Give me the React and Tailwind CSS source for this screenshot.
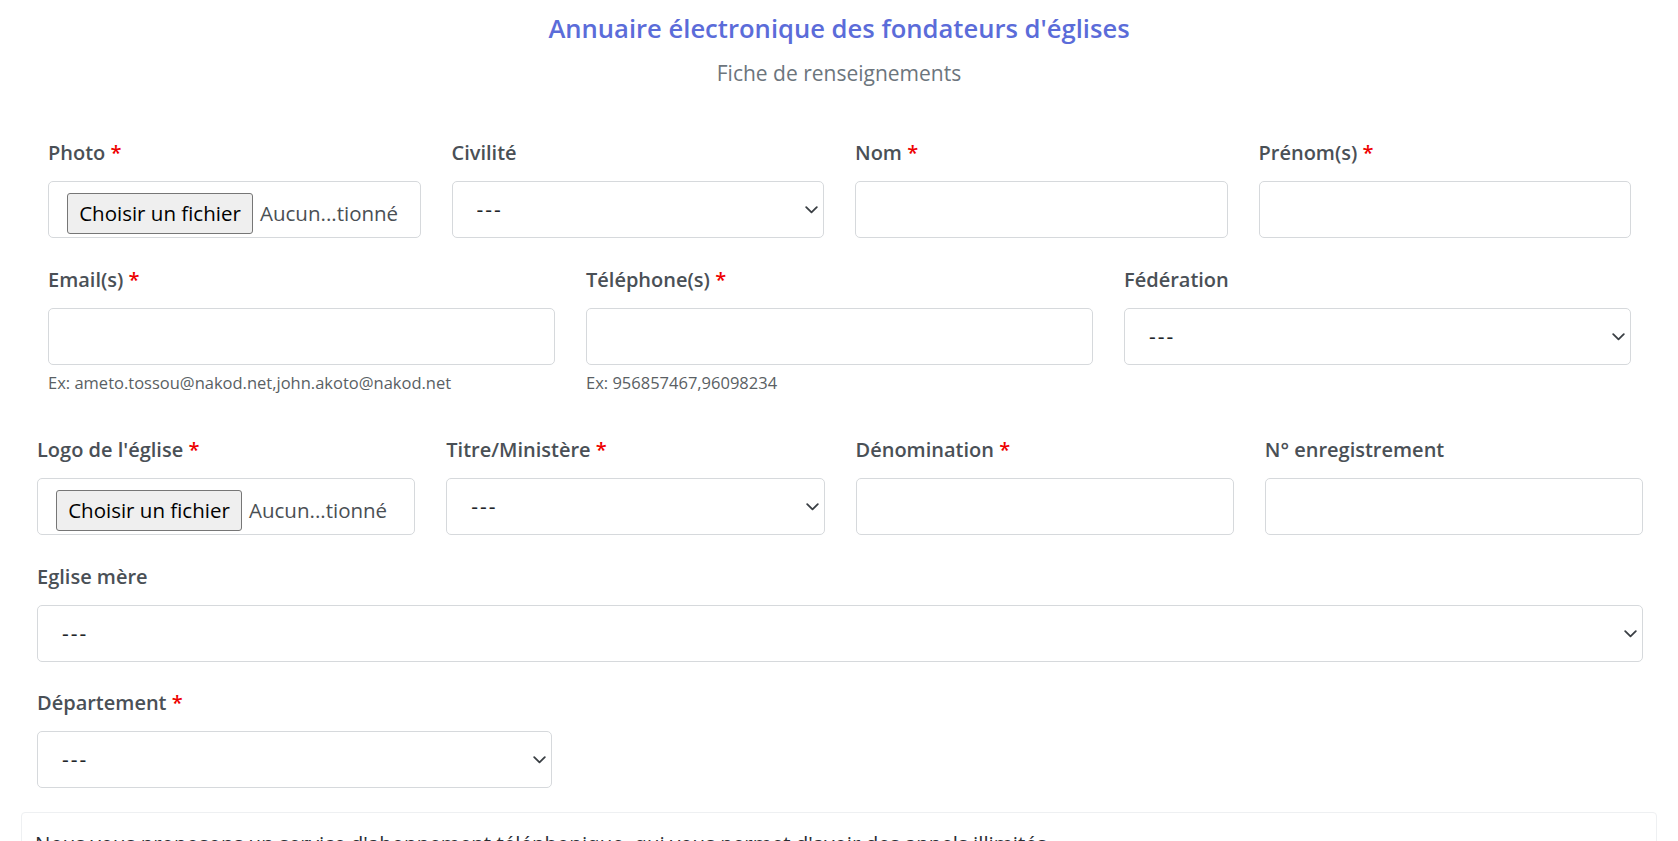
import React from "react";

function Label({ text, req }) {
  return (
    <div className="text-[20px] leading-[24px] font-semibold text-[#4a5056] mb-[16px] whitespace-nowrap">
      {text}
      {req && <span className="text-[#ee0000]"> *</span>}
    </div>
  );
}

function TextInput() {
  return (
    <input
      type="text"
      className="block w-full h-[57px] border border-[#d6d9dc] rounded-[5px] bg-white px-[24px] text-[20px] outline-none"
    />
  );
}

function Chevron() {
  return (
    <svg
      className="absolute right-[6px] top-1/2 -translate-y-1/2 pointer-events-none"
      width="13"
      height="8"
      viewBox="0 0 13 8"
      fill="none"
    >
      <polyline points="1.2,1.2 6.5,6.4 11.8,1.2" stroke="#3a3f44" strokeWidth="1.8" strokeLinecap="round" strokeLinejoin="round" />
    </svg>
  );
}

function Select() {
  return (
    <div className="relative">
      <select className="block w-full h-[57px] appearance-none border border-[#d6d9dc] rounded-[5px] bg-white pl-[24px] pr-[30px] text-[21px] tracking-[2px] text-[#212529] outline-none">
        <option>---</option>
      </select>
      <Chevron />
    </div>
  );
}

function FileInput() {
  return (
    <div className="h-[57px] border border-[#d6d9dc] rounded-[5px] bg-white pl-[18px] pt-[11px] flex items-start overflow-hidden">
      <span className="w-[186px] h-[41px] shrink-0 flex items-center justify-center border border-[#767676] bg-[#efefef] rounded-[3px] text-[20.5px] text-black whitespace-nowrap">
        Choisir un fichier
      </span>
      <span className="ml-[7px] h-[41px] flex items-center text-[20.5px] text-[#4a4f54] whitespace-nowrap">
        Aucun...tionné
      </span>
    </div>
  );
}

function Field({ label, req, children, help }) {
  return (
    <div className="min-w-0">
      <Label text={label} req={req} />
      {children}
      {help && (
        <div className="mt-[8px] text-[16.5px] leading-[20px] text-[#5a5f64] whitespace-nowrap">{help}</div>
      )}
    </div>
  );
}

export default function App() {
  return (
    <div className="min-h-screen bg-white font-['Open_Sans',sans-serif] text-[#212529]">
      <div className="pt-[14px] text-center">
        <h1 className="text-[25.6px] leading-[29px] font-semibold text-[#5b6cd9]">
          Annuaire électronique des fondateurs d'églises
        </h1>
        <p className="mt-[16px] text-[21px] leading-[28px] text-[#6c757d]">Fiche de renseignements</p>
      </div>

      <div className="pl-[48px] pr-[47px] mt-[54px]">
        <div className="grid grid-cols-4 gap-x-[31px]">
          <Field label="Photo" req>
            <FileInput />
          </Field>
          <Field label="Civilité">
            <Select />
          </Field>
          <Field label="Nom" req>
            <TextInput />
          </Field>
          <Field label="Prénom(s)" req>
            <TextInput />
          </Field>
        </div>
        <div className="grid grid-cols-3 gap-x-[31px] mt-[30px]">
          <Field label="Email(s)" req help="Ex: ameto.tossou@nakod.net,john.akoto@nakod.net">
            <TextInput />
          </Field>
          <Field label="Téléphone(s)" req help="Ex: 956857467,96098234">
            <TextInput />
          </Field>
          <Field label="Fédération">
            <Select />
          </Field>
        </div>
      </div>

      <div className="pl-[37px] pr-[35px] mt-[45px]">
        <div className="grid grid-cols-4 gap-x-[31px]">
          <Field label="Logo de l'église" req>
            <FileInput />
          </Field>
          <Field label="Titre/Ministère" req>
            <Select />
          </Field>
          <Field label="Dénomination" req>
            <TextInput />
          </Field>
          <Field label="N° enregistrement">
            <TextInput />
          </Field>
        </div>
        <div className="mt-[30px]">
          <Field label="Eglise mère">
            <Select />
          </Field>
        </div>
        <div className="grid grid-cols-3 gap-x-[31px] mt-[29px]">
          <Field label="Département" req>
            <Select />
          </Field>
        </div>
      </div>

      <div className="mx-[21px] mt-[24px] border border-[#eef0f2] rounded-[4px] px-[13px] pt-[18px] pb-[20px]">
        <p className="text-[20.5px] leading-[24px] text-[#2a2e33]">
          Nous vous proposons un service d'abonnement téléphonique, qui vous permet d'avoir des appels illimités
        </p>
      </div>
    </div>
  );
}
